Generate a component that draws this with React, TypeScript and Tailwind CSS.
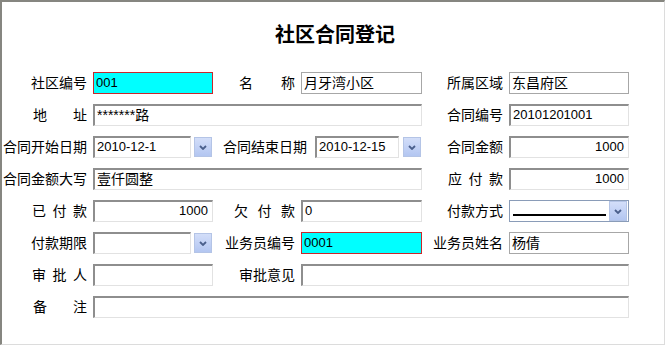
import type { ReactNode } from 'react'

const FONT = "font-['Liberation_Sans','Noto_Sans_CJK_SC',sans-serif]"

function Label({ w, text, spread, sw, pr = 6 }: { w: number; text: string; spread?: boolean; sw?: number; pr?: number }) {
  return (
    <div className="flex shrink-0 justify-end h-[22px] items-center" style={{ width: w, paddingRight: pr }}>
      {spread ? (
        <span className="flex justify-between" style={{ width: sw }}>
          {text.split('').map((c, i) => (
            <span key={i}>{c}</span>
          ))}
        </span>
      ) : (
        <span className="whitespace-nowrap">{text}</span>
      )}
    </div>
  )
}

function Box({
  w,
  children,
  right,
  kind = 'sunken',
  size = 'text-[13px]',
}: {
  w: number
  children?: ReactNode
  right?: boolean
  kind?: 'sunken' | 'flat' | 'active'
  size?: string
}) {
  const border =
    kind === 'active'
      ? 'border border-[#c8282c] bg-[#00ffff]'
      : kind === 'flat'
        ? 'border border-[#a7a7a7] bg-white'
        : 'border-t-2 border-l-2 border-t-[#8e8e8e] border-l-[#8e8e8e] border-r border-b border-r-[#e2e2e2] border-b-[#e2e2e2] bg-white'
  return (
    <div
      className={`flex shrink-0 h-[22px] items-center px-[2px] pb-[1px] overflow-hidden whitespace-nowrap leading-[18px] ${size} ${border} ${right ? 'justify-end pr-[4px]' : ''}`}
      style={{ width: w }}
    >
      {children}
    </div>
  )
}

// 콤보 오른쪽 파란 버튼
function DropBtn() {
  return (
    <div className="flex shrink-0 items-center justify-center w-[18px] h-[20px] border border-[#b4c4e6] bg-gradient-to-b from-[#d3def9] to-[#b3c6f1]">
      <svg width="8" height="5" viewBox="0 0 8 5">
        <path d="M1 1 L4 4 L7 1" fill="none" stroke="#4a5f8c" strokeWidth="1.8" />
      </svg>
    </div>
  )
}

function DateBox({ w, value, gap = 'gap-[3px]' }: { w: number; value?: string; gap?: string }) {
  return (
    <div className={`flex shrink-0 items-center ${gap}`}>
      <Box w={w}>{value}</Box>
      <DropBtn />
    </div>
  )
}

function Row({ children }: { children: ReactNode }) {
  return <div className="flex items-center h-[22px]">{children}</div>
}

export default function App() {
  return (
    <div
      className={`w-[665px] h-[345px] bg-white border-t-2 border-l-2 border-[#868680] border-r border-b border-r-[#dcdcdc] border-b-[#dcdcdc] text-[14px] text-black ${FONT}`}
    >
      <div className="flex justify-center pt-[20px] h-[70px]">
        <h1 className="text-[20px] font-bold leading-[26px] ml-[4px]">社区合同登记</h1>
      </div>

      <div className="flex flex-col gap-[10px]">
        <Row>
          <Label w={91} text="社区编号" />
          <Box w={120} kind="active">001</Box>
          <Label w={88} text="名称" spread sw={56} />
          <Box w={121} kind="flat" size="text-[14px]">月牙湾小区</Box>
          <Label w={87} text="所属区域" />
          <Box w={120} kind="flat" size="text-[14px]">东昌府区</Box>
        </Row>

        <Row>
          <Label w={91} text="地址" spread sw={54} />
          <Box w={329} size="text-[14px]">*******路</Box>
          <Label w={87} text="合同编号" />
          <Box w={120}>20101201001</Box>
        </Row>

        <Row>
          <Label w={91} text="合同开始日期" />
          <DateBox w={98} value="2010-12-1" />
          <Label w={103} text="合同结束日期" pr={8} />
          <DateBox w={84} value="2010-12-15" gap="gap-[4px]" />
          <Label w={88} text="合同金额" />
          <Box w={120} right>1000</Box>
        </Row>

        <Row>
          <Label w={91} text="合同金额大写" />
          <Box w={329} size="text-[14px]">壹仟圆整</Box>
          <Label w={87} text="应付款" spread sw={55} />
          <Box w={120} right>1000</Box>
        </Row>

        <Row>
          <Label w={91} text="已付款" spread sw={55} />
          <Box w={120} right>1000</Box>
          <Label w={88} text="欠付款" spread sw={61} />
          <Box w={121}>0</Box>
          <Label w={87} text="付款方式" />
          <div className="flex shrink-0 w-[120px] h-[22px] items-center border border-[#8a9cb8] bg-white pl-[3px] pr-[1px]">
            <div className="flex-1 h-[2px] bg-black mt-[8px] mr-[3px]" />
            <DropBtn />
          </div>
        </Row>

        <Row>
          <Label w={91} text="付款期限" />
          <DateBox w={98} />
          <Label w={89} text="业务员编号" />
          <Box w={121} kind="active">0001</Box>
          <Label w={87} text="业务员姓名" />
          <Box w={120} kind="flat" size="text-[14px]">杨倩</Box>
        </Row>

        <Row>
          <Label w={91} text="审批人" spread sw={55} />
          <Box w={120} />
          <Label w={88} text="审批意见" />
          <Box w={328} />
        </Row>

        <Row>
          <Label w={91} text="备注" spread sw={54} />
          <Box w={536} />
        </Row>
      </div>
    </div>
  )
}
